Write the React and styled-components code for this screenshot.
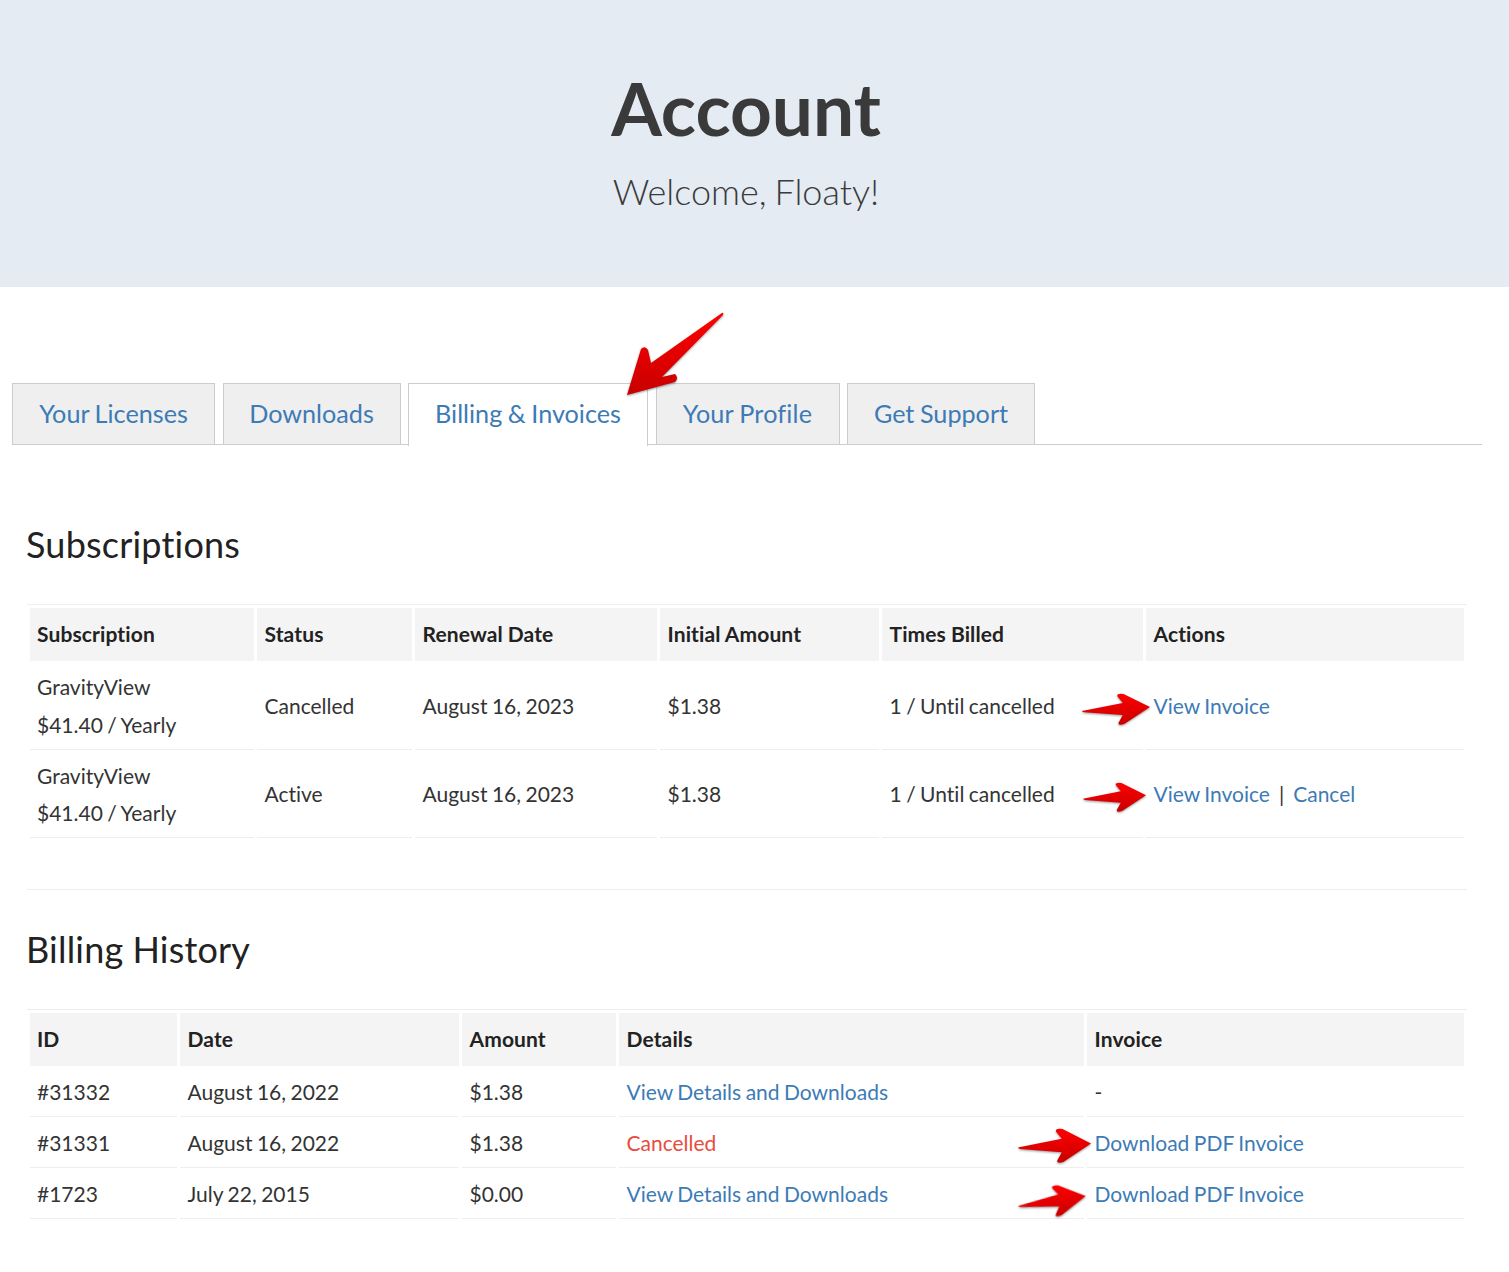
import React from "react";
import styled, { createGlobalStyle } from "styled-components";

const Global = createGlobalStyle`
  html, body { margin: 0; padding: 0; background: #fff; }
  body { font-family: Lato, "Open Sans", sans-serif; color: #333; font-variant-ligatures: none; word-spacing: -0.9px; }
`;
const Page = styled.div`position: relative; width: 1509px; height: 1272px; overflow: hidden;`;
const Hero = styled.header`
  height: 287px; box-sizing: border-box; background: #e4ebf3; text-align: center; padding: 65px 17px 0 0;
`;
const Title = styled.h1`margin: 0; font-size: 73px; line-height: 86px; font-weight: 700; color: #3a3a3a;`;
const Subtitle = styled.p`margin: 17px 0 0; font-size: 36px; line-height: 46px; font-weight: 300; color: #3a3a3a; word-spacing: -2px;`;
const Main = styled.main`width: 1470px; margin-left: 12px;`;
const Tabs = styled.nav`display: flex; gap: 7.5px; margin-top: 96px; height: 62px; box-sizing: border-box; border-bottom: 1px solid #ccc;`;
const Tab = styled.a`
  display: block; box-sizing: border-box; flex: none; width: ${p => p.$w}px; text-align: center;
  height: ${p => (p.$active ? "63px" : "62px")};
  font-size: 25.2px; line-height: 59px; color: #3d7bb5; letter-spacing: ${p => p.$track || 0}px;
  border: 1px solid #ccc; border-bottom: ${p => (p.$active ? "none" : "1px solid #ccc")};
  background: ${p => (p.$active ? "#fff" : "#efefef")};
`;
const Content = styled.section`padding: 77px 15px 0;`;
const Heading = styled.h2`margin: 0 0 38px -1px; font-size: 36px; line-height: 44px; font-weight: 400; color: #222; letter-spacing: .2px; word-spacing: -.4px;`;
const Table = styled.table`
  width: 1440px; table-layout: fixed; border-collapse: separate; border-spacing: 3px;
  border-top: 1px solid #eee; font-size: 21px; line-height: 37.8px; color: #333;
`;
const Th = styled.th`
  width: ${p => p.$w}px; box-sizing: border-box; height: 53px; padding: 0 8px 2px 7.5px; background: #f4f4f4;
  text-align: left; font-weight: 700; color: #222; letter-spacing: .12px; word-spacing: -.3px;
  &:first-child { padding-left: 7px; }
`;
const Td = styled.td`
  box-sizing: content-box; padding: 4px 8px 5px 7.5px; border-bottom: 1px solid #eee; vertical-align: middle; font-weight: 400;
  &:first-child { padding-left: 7px; }
`;
const Line = styled.div``;
const Link = styled.a`color: #3d7bb5;`;
const Sep = styled.span`margin: 0 9px;`;
const Danger = styled.span`color: #e74c3c;`;
const Rule = styled.hr`margin: 48px 0 37px; border: 0; border-top: 1px solid #eee;`;
const Mark = styled.svg`
  position: absolute; left: ${p => p.$x}px; top: ${p => p.$y}px; width: ${p => p.$w}px; height: ${p => p.$h}px;
  transform: rotate(${p => p.$r || 0}deg); overflow: visible; filter: drop-shadow(0 1px 1px rgba(60,60,60,.55));
`;

const SMALL = "M0 56 L60 31 L52 10 Q51 0 61 3 L100 44 L62 97 Q52 103 54 92 L60 69 L3 60 Q0 58 0 56 Z";
const BIG = "M102 5 L31 55 L28 42 Q25 37 21 41 L7 87 L55 74 Q59 70 55 66 L42 69 L103 7 Q104 4 102 5 Z";

const Defs = () => (
  <svg width="0" height="0" style={{ position: "absolute" }}>
    <defs>
      <linearGradient id="arrowRed" x1="0" y1="0" x2="0" y2="1">
        <stop offset="0" stopColor="#ff0000" />
        <stop offset="1" stopColor="#c80000" />
      </linearGradient>
    </defs>
  </svg>
);

const Arrow = ({ x, y, w, h, r }) => (
  <Mark $x={x} $y={y} $w={w} $h={h} $r={r} viewBox="0 0 100 100" preserveAspectRatio="none">
    <path d={SMALL} fill="url(#arrowRed)" />
  </Mark>
);

const subs = [
  { status: "Cancelled", cancel: false },
  { status: "Active", cancel: true },
];
const history = [
  { id: "#31332", date: "August 16, 2022", amount: "$1.38", details: "View Details and Downloads", invoice: "-" },
  { id: "#31331", date: "August 16, 2022", amount: "$1.38", cancelled: true, details: "Cancelled", invoice: "Download PDF Invoice" },
  { id: "#1723", date: "July 22, 2015", amount: "$0.00", details: "View Details and Downloads", invoice: "Download PDF Invoice" },
];

export default function App() {
  return (
    <Page>
      <Global />
      <Defs />
      <Hero>
        <Title>Account</Title>
        <Subtitle>Welcome, Floaty!</Subtitle>
      </Hero>
      <Main>
        <Tabs>
          <Tab $w={203}>Your Licenses</Tab>
          <Tab $w={178}>Downloads</Tab>
          <Tab $w={240} $active>Billing &amp; Invoices</Tab>
          <Tab $w={184} $track={0.2}>Your Profile</Tab>
          <Tab $w={188}>Get Support</Tab>
        </Tabs>
        <Content>
          <Heading>Subscriptions</Heading>
          <Table>
            <thead>
              <tr>
                <Th $w={224}>Subscription</Th>
                <Th $w={155}>Status</Th>
                <Th $w={242}>Renewal Date</Th>
                <Th $w={219}>Initial Amount</Th>
                <Th $w={261}>Times Billed</Th>
                <Th $w={318}>Actions</Th>
              </tr>
            </thead>
            <tbody>
              {subs.map(s => (
                <tr key={s.status}>
                  <Td>
                    <Line>GravityView</Line>
                    <Line>$41.40 / Yearly</Line>
                  </Td>
                  <Td>{s.status}</Td>
                  <Td>August 16, 2023</Td>
                  <Td>$1.38</Td>
                  <Td>1 / Until cancelled</Td>
                  <Td>
                    <Link>View Invoice</Link>
                    {s.cancel && (
                      <>
                        <Sep>|</Sep>
                        <Link>Cancel</Link>
                      </>
                    )}
                  </Td>
                </tr>
              ))}
            </tbody>
          </Table>
          <Rule />
          <Heading>Billing History</Heading>
          <Table>
            <thead>
              <tr>
                <Th $w={147}>ID</Th>
                <Th $w={279}>Date</Th>
                <Th $w={154}>Amount</Th>
                <Th $w={465}>Details</Th>
                <Th $w={377}>Invoice</Th>
              </tr>
            </thead>
            <tbody>
              {history.map(h => (
                <tr key={h.id}>
                  <Td>{h.id}</Td>
                  <Td>{h.date}</Td>
                  <Td>{h.amount}</Td>
                  <Td>{h.cancelled ? <Danger>{h.details}</Danger> : <Link>{h.details}</Link>}</Td>
                  <Td>{h.invoice === "-" ? "-" : <Link>{h.invoice}</Link>}</Td>
                </tr>
              ))}
            </tbody>
          </Table>
        </Content>
      </Main>
      <Mark $x={620} $y={308} $w={105} $h={90} viewBox="0 0 105 90">
        <path d={BIG} fill="url(#arrowRed)" />
      </Mark>
      <Arrow x={1082} y={693} w={68} h={32} />
      <Arrow x={1083} y={782} w={63} h={30} />
      <Arrow x={1018} y={1128} w={73} h={35} />
      <Arrow x={1018} y={1185} w={68} h={32} r={-5} />
    </Page>
  );
}
